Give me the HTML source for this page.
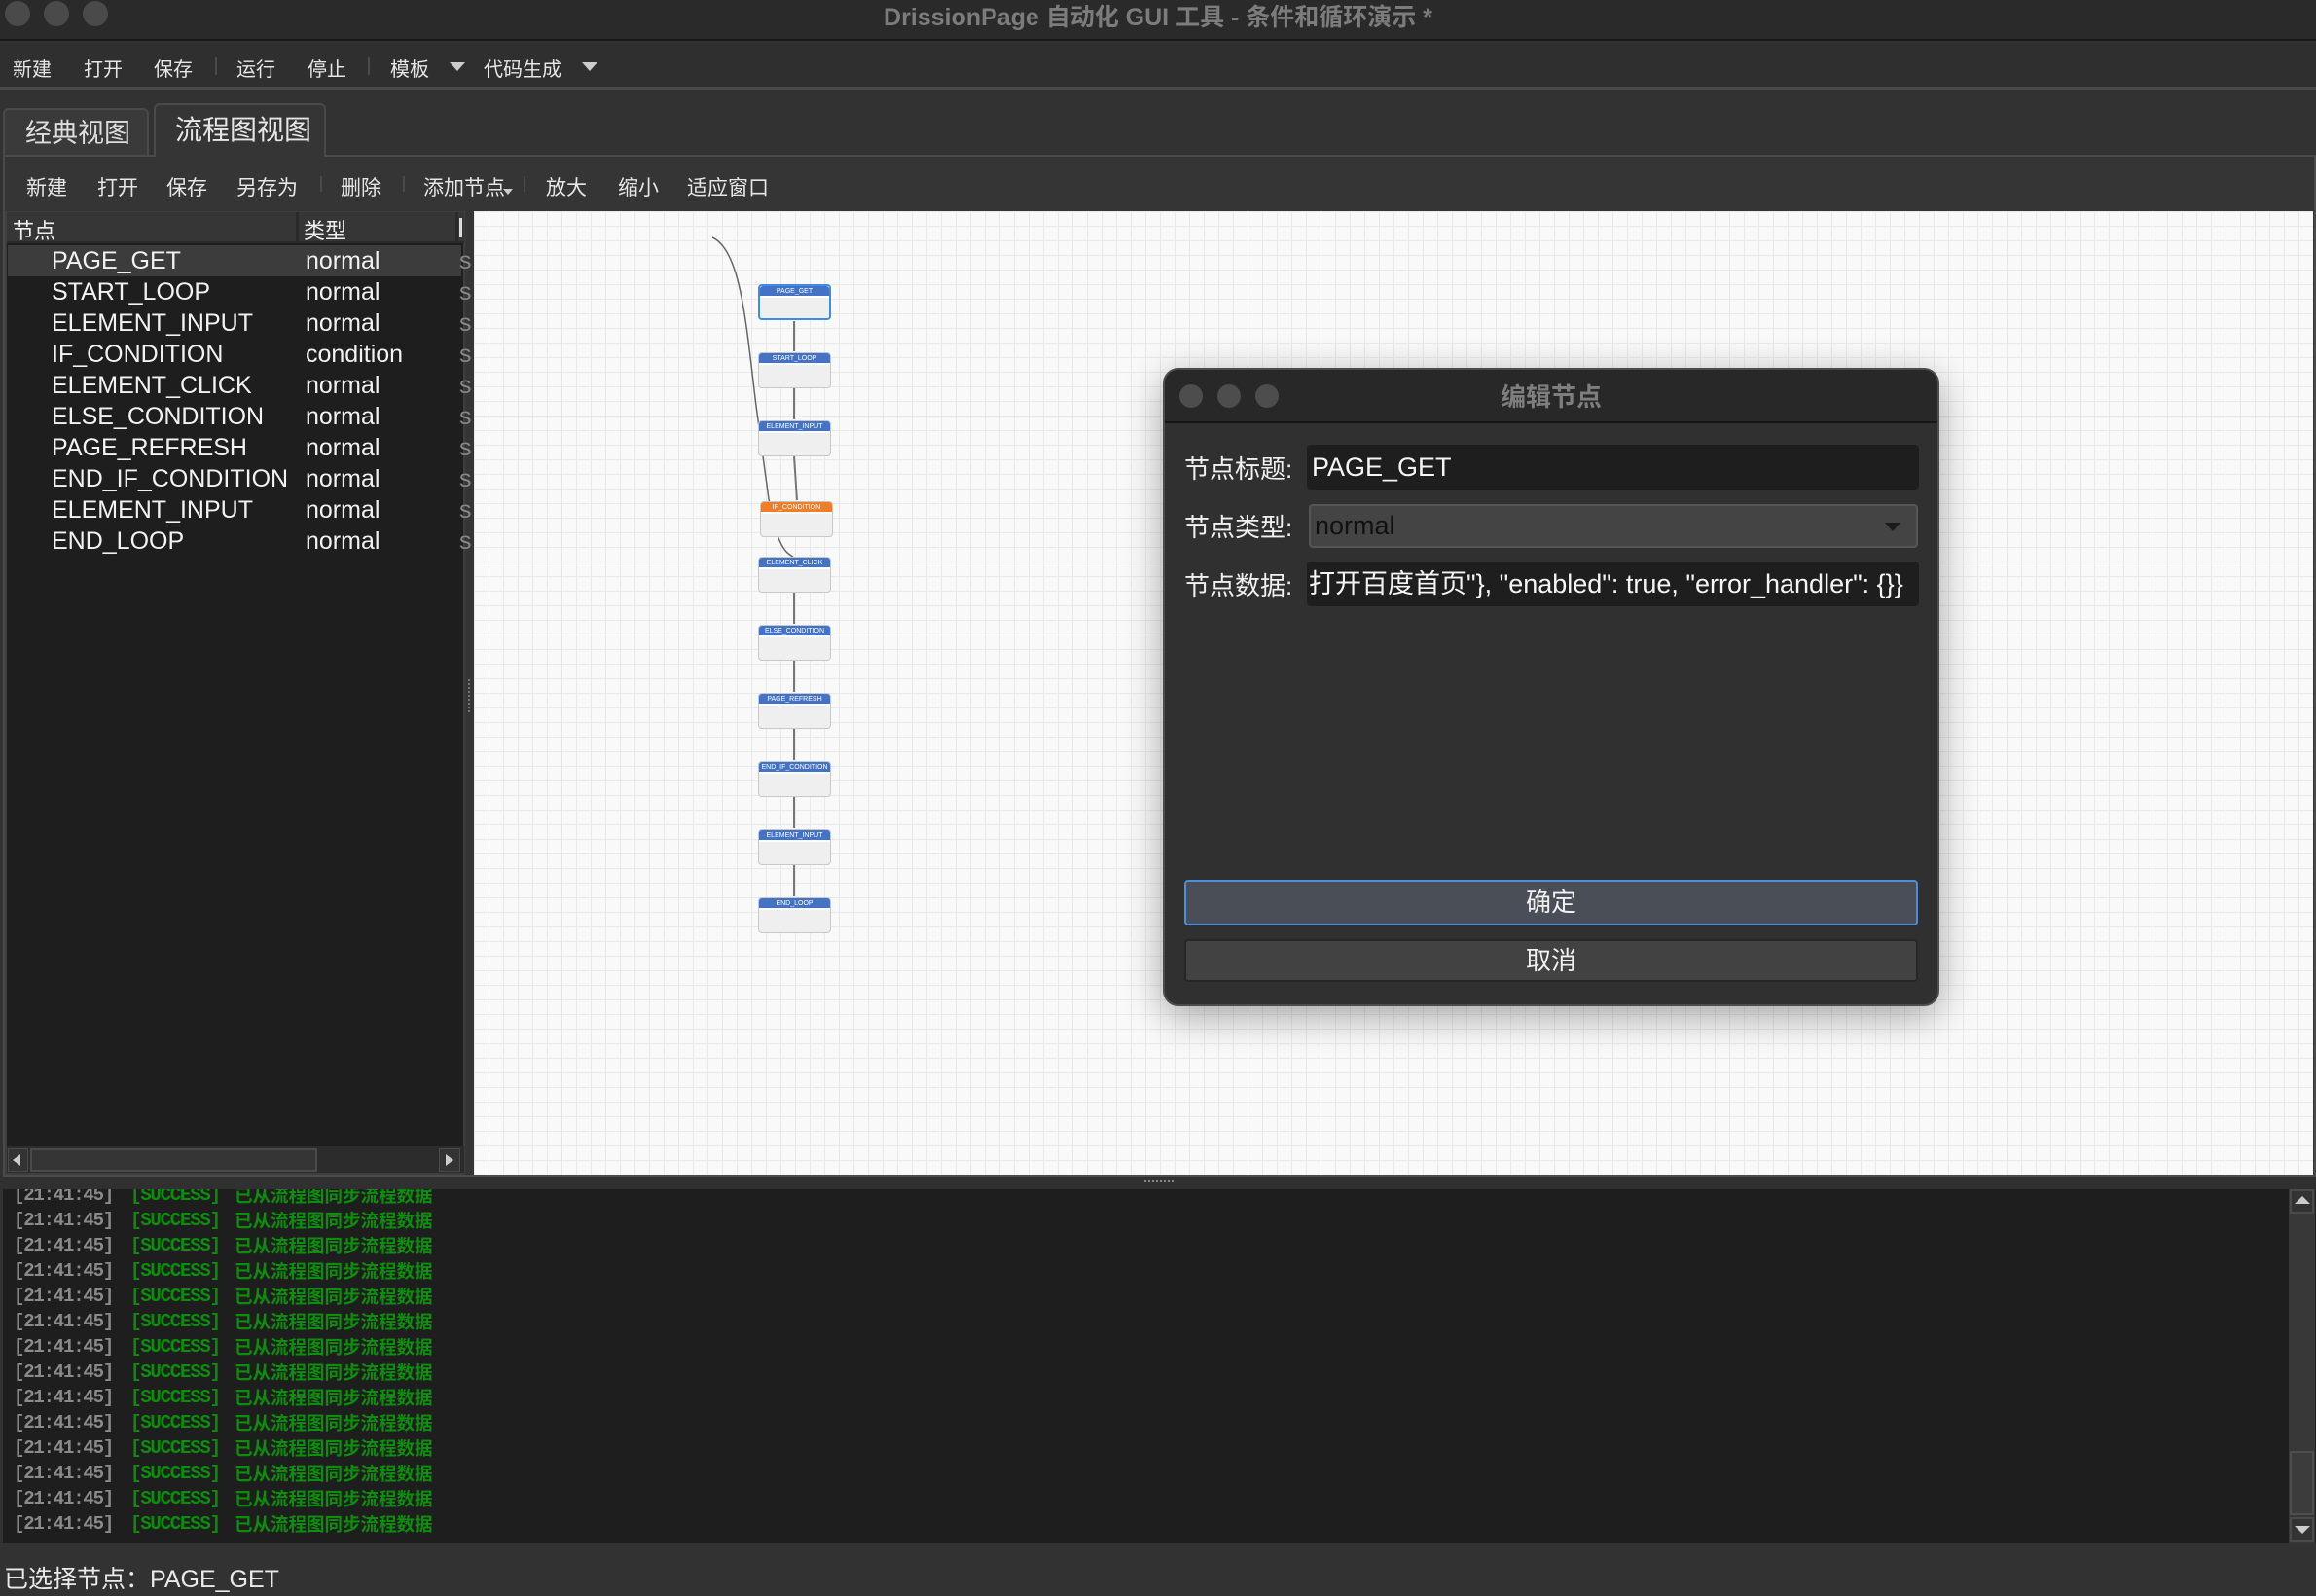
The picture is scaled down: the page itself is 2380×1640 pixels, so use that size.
<!DOCTYPE html>
<html><head><meta charset="utf-8">
<style>
*{box-sizing:border-box;margin:0;padding:0}
body{width:2380px;height:1640px;background:#323232;position:relative;overflow:hidden;font-family:"Liberation Sans","Noto Sans CJK SC",sans-serif;color:#e8e8e8}
.a{position:absolute}
.tl{position:absolute;width:26px;height:26px;border-radius:50%;background:#4a4a4a;top:1px}
.mi{position:absolute;top:55px;font-size:20px;color:#e6e6e6}
.ti{position:absolute;top:177px;font-size:21px;color:#e6e6e6}
.sep{position:absolute;width:2px;height:20px;background:#4a4a4a}
.row{position:absolute;left:8px;width:466px;height:32px;font-size:25px;line-height:32px;color:#f2f2f2}
.row span{position:absolute}
.row .n{left:45px}.row .t{left:306px}.row .s{left:464px;color:#888}
.node{position:absolute;width:75px;height:37px;background:#efefef;border:1px solid #c8c8c8;border-radius:4px;overflow:visible}
.node .h{height:12px;background:#4472c4;border-radius:3px 3px 0 0;border-bottom:2px solid #fff;font-size:7px;color:#fff;text-align:center;line-height:11px;overflow:hidden;white-space:nowrap}
.log{position:absolute;left:0;width:600px;height:26px;line-height:26px;white-space:pre}
.log span{position:absolute;top:0}
.log .tm{left:11px;color:#8a8a8a;font-family:"Liberation Mono",monospace;font-size:19px;letter-spacing:-1.2px;font-weight:bold}
.log .ok{left:131px;color:#0b8f0b;font-family:"Liberation Mono",monospace;font-size:19px;letter-spacing:-1.2px;font-weight:bold}
.log .ms{left:238px;color:#0b8f0b;font-family:"Noto Sans CJK SC",sans-serif;font-size:18.5px;font-weight:bold}
.lbl{position:absolute;left:1217px;font-size:26px;color:#f0f0f0}
</style></head><body>
<!-- title bar -->
<div class="a" style="left:0;top:0;width:2380px;height:42px;background:#2a2a2a;border-bottom:2px solid #1a1a1a"></div>
<div class="tl" style="left:5px"></div><div class="tl" style="left:45px"></div><div class="tl" style="left:85px"></div>
<div class="a" style="left:0;top:-2px;width:2380px;text-align:center;font-size:25px;font-weight:bold;color:#7c7c7c">DrissionPage 自动化 GUI 工具 - 条件和循环演示 *</div>
<!-- menu toolbar -->
<div class="a" style="left:0;top:44px;width:2380px;height:48px;background:#2f2f2f;border-bottom:3px solid #4a4a4a"></div>
<div class="mi" style="left:13px">新建</div>
<div class="mi" style="left:86px">打开</div>
<div class="mi" style="left:158px">保存</div>
<div class="sep" style="left:221px;top:59px;height:18px"></div>
<div class="mi" style="left:243px">运行</div>
<div class="mi" style="left:316px">停止</div>
<div class="sep" style="left:378px;top:59px;height:18px"></div>
<div class="mi" style="left:401px">模板</div>
<div class="a" style="left:462px;top:64px;border-left:8px solid transparent;border-right:8px solid transparent;border-top:9px solid #ccc"></div>
<div class="mi" style="left:497px">代码生成</div>
<div class="a" style="left:598px;top:64px;border-left:8px solid transparent;border-right:8px solid transparent;border-top:9px solid #ccc"></div>
<!-- tabs -->
<div class="a" style="left:3px;top:111px;width:150px;height:48px;background:#3a3a3a;border:2px solid #4a4a4a;border-bottom:none;border-radius:6px 6px 0 0"></div>
<div class="a" style="left:26px;top:115px;font-size:27px;color:#ddd">经典视图</div>
<div class="a" style="left:158px;top:106px;width:177px;height:56px;background:#353535;border:2px solid #4a4a4a;border-bottom:none;border-radius:6px 6px 0 0"></div>
<div class="a" style="left:180px;top:112px;font-size:28px;color:#e6e6e6">流程图视图</div>
<!-- inner panel -->
<div class="a" style="left:3px;top:159px;width:2377px;height:1050px;background:#353535;border:2px solid #4a4a4a"></div>
<div class="a" style="left:160px;top:158px;width:173px;height:4px;background:#353535"></div>
<div class="ti" style="left:27px">新建</div>
<div class="ti" style="left:100px">打开</div>
<div class="ti" style="left:171px">保存</div>
<div class="ti" style="left:243px">另存为</div>
<div class="sep" style="left:329px;top:181px;height:16px"></div>
<div class="ti" style="left:350px">删除</div>
<div class="sep" style="left:414px;top:181px;height:16px"></div>
<div class="ti" style="left:435px">添加节点</div>
<div class="a" style="left:517px;top:194px;border-left:5px solid transparent;border-right:5px solid transparent;border-top:6px solid #ccc"></div>
<div class="sep" style="left:538px;top:181px;height:16px"></div>
<div class="ti" style="left:561px">放大</div>
<div class="ti" style="left:635px">缩小</div>
<div class="ti" style="left:706px">适应窗口</div>
<!-- left tree -->
<div class="a" style="left:5px;top:217px;width:473px;height:990px;background:#1e1e1e;border:2px solid #3e3e3e"></div>
<div class="a" style="left:7px;top:218px;width:470px;height:32px;background:#363636;border-bottom:2px solid #2a2a2a"></div>
<div class="a" style="left:304px;top:218px;width:3px;height:32px;background:#2a2a2a"></div>
<div class="a" style="left:468px;top:218px;width:3px;height:32px;background:#2a2a2a"></div>
<div class="a" style="left:13px;top:220px;font-size:22px;color:#eee">节点</div>
<div class="a" style="left:312px;top:220px;font-size:22px;color:#eee">类型</div>
<div class="a" style="left:472px;top:224px;width:3px;height:20px;background:#ddd"></div>
<div class="row" style="top:252px;background:#3c3c3c"><span class="n">PAGE_GET</span><span class="t">normal</span><span class="s">s</span></div>
<div class="row" style="top:284px"><span class="n">START_LOOP</span><span class="t">normal</span><span class="s">s</span></div>
<div class="row" style="top:316px"><span class="n">ELEMENT_INPUT</span><span class="t">normal</span><span class="s">s</span></div>
<div class="row" style="top:348px"><span class="n">IF_CONDITION</span><span class="t">condition</span><span class="s">s</span></div>
<div class="row" style="top:380px"><span class="n">ELEMENT_CLICK</span><span class="t">normal</span><span class="s">s</span></div>
<div class="row" style="top:412px"><span class="n">ELSE_CONDITION</span><span class="t">normal</span><span class="s">s</span></div>
<div class="row" style="top:444px"><span class="n">PAGE_REFRESH</span><span class="t">normal</span><span class="s">s</span></div>
<div class="row" style="top:476px"><span class="n">END_IF_CONDITION</span><span class="t">normal</span><span class="s">s</span></div>
<div class="row" style="top:508px"><span class="n">ELEMENT_INPUT</span><span class="t">normal</span><span class="s">s</span></div>
<div class="row" style="top:540px"><span class="n">END_LOOP</span><span class="t">normal</span><span class="s">s</span></div>
<div class="a" style="left:7px;top:1178px;width:470px;height:27px;background:#2c2c2c"></div>
<div class="a" style="left:8px;top:1180px;width:21px;height:24px;background:#333;border:1px solid #4a4a4a"></div>
<div class="a" style="left:13px;top:1186px;border-top:6px solid transparent;border-bottom:6px solid transparent;border-right:8px solid #ccc"></div>
<div class="a" style="left:31px;top:1180px;width:295px;height:24px;background:#353535;border:2px solid #4a4a4a"></div>
<div class="a" style="left:451px;top:1180px;width:22px;height:24px;background:#333;border:1px solid #4a4a4a"></div>
<div class="a" style="left:458px;top:1186px;border-top:6px solid transparent;border-bottom:6px solid transparent;border-left:8px solid #ccc"></div>
<div class="a" style="left:481px;top:698px;width:2px;height:34px;border-left:2px dotted #777"></div>
<!-- canvas -->
<div class="a" style="left:487px;top:217px;width:1890px;height:990px;background-color:#f9f9f9;background-image:linear-gradient(#e9e9e9 1px,transparent 1px),linear-gradient(90deg,#e9e9e9 1px,transparent 1px);background-size:15px 15px;overflow:hidden">
<svg class="a" style="left:0;top:0" width="600" height="990">
<path d="M245 27 C275 40 280 120 290 200 L303 296 L313 336 C318 348 322 352 328 355" fill="none" stroke="#666" stroke-width="1.5"/>
<g stroke="#777" stroke-width="2">
<line x1="329" y1="113" x2="329" y2="144"/><line x1="329" y1="182" x2="329" y2="214"/>
<line x1="329" y1="252" x2="332" y2="297"/><line x1="329" y1="392" x2="329" y2="424"/>
<line x1="329" y1="462" x2="329" y2="494"/><line x1="329" y1="532" x2="329" y2="564"/>
<line x1="329" y1="602" x2="329" y2="634"/><line x1="329" y1="672" x2="329" y2="704"/>
</g>
</svg>
</div>
<div class="a" style="left:487px;top:217px;width:1890px;height:990px">
<div class="node" style="left:292px;top:75px;border:2px solid #3d8ee0"><div class="h">PAGE_GET</div></div>
<div class="node" style="left:292px;top:145px"><div class="h">START_LOOP</div></div>
<div class="node" style="left:292px;top:215px"><div class="h">ELEMENT_INPUT</div></div>
<div class="node" style="left:294px;top:298px"><div class="h" style="background:#ee7d2c">IF_CONDITION</div></div>
<div class="node" style="left:292px;top:355px"><div class="h">ELEMENT_CLICK</div></div>
<div class="node" style="left:292px;top:425px"><div class="h">ELSE_CONDITION</div></div>
<div class="node" style="left:292px;top:495px"><div class="h">PAGE_REFRESH</div></div>
<div class="node" style="left:292px;top:565px"><div class="h">END_IF_CONDITION</div></div>
<div class="node" style="left:292px;top:635px"><div class="h">ELEMENT_INPUT</div></div>
<div class="node" style="left:292px;top:705px"><div class="h">END_LOOP</div></div>
</div>
<!-- dialog -->
<div class="a" style="left:1195px;top:378px;width:798px;height:656px;background:#303030;border:2px solid #4c4c4c;border-radius:16px;box-shadow:0 10px 40px rgba(0,0,0,0.35);overflow:hidden">
<div class="a" style="left:0;top:0;width:100%;height:55px;background:#282828;border-bottom:2px solid #161616"></div>
<div class="a" style="left:15px;top:15px;width:24px;height:24px;border-radius:50%;background:#4d4d4d"></div>
<div class="a" style="left:54px;top:15px;width:24px;height:24px;border-radius:50%;background:#4d4d4d"></div>
<div class="a" style="left:93px;top:15px;width:24px;height:24px;border-radius:50%;background:#4d4d4d"></div>
<div class="a" style="left:0;top:8px;width:100%;text-align:center;font-size:26px;font-weight:bold;color:#7e7e7e">编辑节点</div>
</div>
<div class="lbl" style="top:462px">节点标题:</div>
<div class="lbl" style="top:522px">节点类型:</div>
<div class="lbl" style="top:582px">节点数据:</div>
<div class="a" style="left:1343px;top:457px;width:629px;height:46px;background:#1e1e1e;border-radius:4px;font-size:27px;line-height:46px;padding-left:5px;color:#f5f5f5">PAGE_GET</div>
<div class="a" style="left:1345px;top:518px;width:626px;height:45px;background:#444;border:2px solid #555;border-radius:4px;font-size:27px;line-height:41px;padding-left:4px;color:#111">normal</div>
<div class="a" style="left:1937px;top:537px;border-left:8px solid transparent;border-right:8px solid transparent;border-top:9px solid #1a1a1a"></div>
<div class="a" style="left:1343px;top:577px;width:629px;height:46px;background:#1e1e1e;border-radius:4px;font-size:27px;line-height:46px;padding-left:2px;color:#f5f5f5;white-space:nowrap;overflow:hidden">打开百度首页"}, "enabled": true, "error_handler": {}}</div>
<div class="a" style="left:1217px;top:904px;width:754px;height:47px;background:#4a4f57;border:2px solid #4b8fdb;border-radius:4px;font-size:26px;line-height:42px;text-align:center;color:#f0f0f0">确定</div>
<div class="a" style="left:1217px;top:965px;width:754px;height:44px;background:#424242;border:2px solid #262626;border-radius:4px;font-size:26px;line-height:40px;text-align:center;color:#f0f0f0">取消</div>
<!-- splitter -->
<div class="a" style="left:0;top:1209px;width:2380px;height:13px;background:#303030"></div>
<div class="a" style="left:1176px;top:1213px;width:30px;height:2px;border-top:2px dotted #888"></div>
<!-- log -->
<div class="a" style="left:3px;top:1222px;width:2377px;height:364px;background:#1e1e1e;overflow:hidden">
<div class="log" style="top:-7px"><span class="tm">[21:41:45]</span><span class="ok">[SUCCESS]</span><span class="ms">已从流程图同步流程数据</span></div>
<div class="log" style="top:19px"><span class="tm">[21:41:45]</span><span class="ok">[SUCCESS]</span><span class="ms">已从流程图同步流程数据</span></div>
<div class="log" style="top:45px"><span class="tm">[21:41:45]</span><span class="ok">[SUCCESS]</span><span class="ms">已从流程图同步流程数据</span></div>
<div class="log" style="top:71px"><span class="tm">[21:41:45]</span><span class="ok">[SUCCESS]</span><span class="ms">已从流程图同步流程数据</span></div>
<div class="log" style="top:97px"><span class="tm">[21:41:45]</span><span class="ok">[SUCCESS]</span><span class="ms">已从流程图同步流程数据</span></div>
<div class="log" style="top:123px"><span class="tm">[21:41:45]</span><span class="ok">[SUCCESS]</span><span class="ms">已从流程图同步流程数据</span></div>
<div class="log" style="top:149px"><span class="tm">[21:41:45]</span><span class="ok">[SUCCESS]</span><span class="ms">已从流程图同步流程数据</span></div>
<div class="log" style="top:175px"><span class="tm">[21:41:45]</span><span class="ok">[SUCCESS]</span><span class="ms">已从流程图同步流程数据</span></div>
<div class="log" style="top:201px"><span class="tm">[21:41:45]</span><span class="ok">[SUCCESS]</span><span class="ms">已从流程图同步流程数据</span></div>
<div class="log" style="top:227px"><span class="tm">[21:41:45]</span><span class="ok">[SUCCESS]</span><span class="ms">已从流程图同步流程数据</span></div>
<div class="log" style="top:253px"><span class="tm">[21:41:45]</span><span class="ok">[SUCCESS]</span><span class="ms">已从流程图同步流程数据</span></div>
<div class="log" style="top:279px"><span class="tm">[21:41:45]</span><span class="ok">[SUCCESS]</span><span class="ms">已从流程图同步流程数据</span></div>
<div class="log" style="top:305px"><span class="tm">[21:41:45]</span><span class="ok">[SUCCESS]</span><span class="ms">已从流程图同步流程数据</span></div>
<div class="log" style="top:331px"><span class="tm">[21:41:45]</span><span class="ok">[SUCCESS]</span><span class="ms">已从流程图同步流程数据</span></div>
</div>
<div class="a" style="left:2352px;top:1222px;width:27px;height:364px;background:#383838"></div>
<div class="a" style="left:2353px;top:1222px;width:25px;height:25px;background:#333;border:2px solid #4a4a4a"></div>
<div class="a" style="left:2358px;top:1229px;border-left:8px solid transparent;border-right:8px solid transparent;border-bottom:8px solid #ccc"></div>
<div class="a" style="left:2353px;top:1491px;width:25px;height:66px;background:#3c3c3c;border:2px solid #4e4e4e"></div>
<div class="a" style="left:2353px;top:1559px;width:25px;height:25px;background:#333;border:2px solid #4a4a4a"></div>
<div class="a" style="left:2358px;top:1568px;border-left:8px solid transparent;border-right:8px solid transparent;border-top:8px solid #ccc"></div>
<!-- status -->
<div class="a" style="left:4px;top:1603px;font-size:25px;color:#eaeaea">已选择节点：PAGE_GET</div>
</body></html>
